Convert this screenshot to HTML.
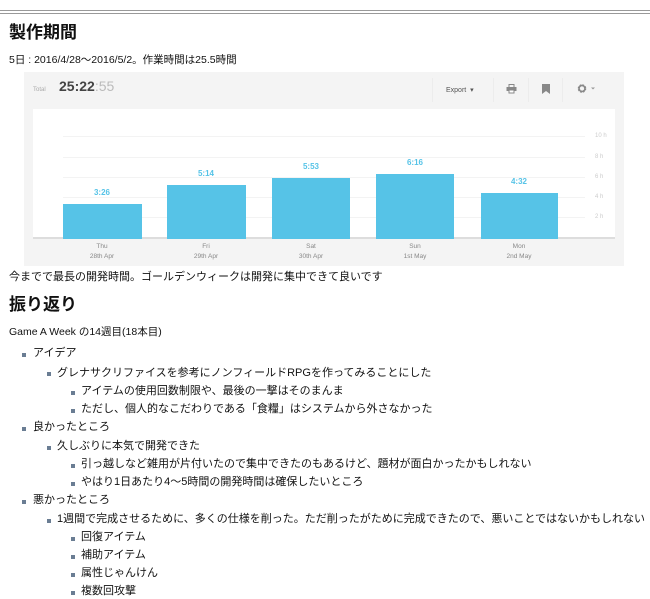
<!DOCTYPE html>
<html><head><meta charset="utf-8"><style>
*{margin:0;padding:0;box-sizing:border-box}
body{width:650px;height:599px;background:#fff;position:relative;overflow:hidden;font-family:"Liberation Sans","Noto Sans CJK JP",sans-serif;color:#111;font-size:11px}
.a{position:absolute;white-space:nowrap;line-height:14px}
h2{position:absolute;font-size:17px;font-weight:bold;line-height:20px;white-space:nowrap}
.b{position:absolute;width:4px;height:4px;background:#6a7d93}
.g{position:absolute;left:63px;width:522px;height:1px;background:#f3f3f3}
.bar{position:absolute;background:#56c3e7;bottom:0}
.v{position:absolute;color:#56c3e7;font-size:8px;font-weight:bold;text-align:center;width:80px}
.d{position:absolute;color:#888;font-size:6.5px;text-align:center;width:80px;line-height:10px}
.y{position:absolute;left:595px;color:#ccc;font-size:6px}
</style></head><body>
<div style="position:absolute;left:0;top:10px;width:650px;height:1px;background:#999"></div>
<div style="position:absolute;left:0;top:13px;width:650px;height:1px;background:#999"></div>
<h2 style="left:9px;top:23px">製作期間</h2>
<div class="a" style="left:9px;top:53px;font-size:10.5px">5日 : 2016/4/28〜2016/5/2。作業時間は25.5時間</div>

<div style="position:absolute;left:24px;top:72px;width:600px;height:194px;background:#f4f4f4">
 <div class="a" style="left:9px;top:11px;font-size:6px;color:#aaa">Total</div>
 <div class="a" style="left:35px;top:7px;font-size:14px;font-weight:bold;color:#444">25:22<span style="color:#bbb;font-weight:normal">:55</span></div>
 <div style="position:absolute;left:408px;top:6px;width:1px;height:24px;background:#ececec"></div>
 <div class="a" style="left:422px;top:12px;font-size:7px;color:#555">Export &nbsp;▾</div>
 <div style="position:absolute;left:469px;top:6px;width:1px;height:24px;background:#ececec"></div>
 <svg style="position:absolute;left:482px;top:12px" width="11" height="10"><rect x="3" y="0.5" width="5" height="3" fill="none" stroke="#888"/><rect x="0.5" y="3" width="10" height="4" fill="#888"/><rect x="3" y="6" width="5" height="3" fill="#fff" stroke="#888"/></svg>
 <div style="position:absolute;left:504px;top:6px;width:1px;height:24px;background:#ececec"></div>
 <svg style="position:absolute;left:518px;top:12px" width="8" height="10"><path d="M0 0H8V10L4 7L0 10Z" fill="#888"/></svg>
 <div style="position:absolute;left:538px;top:6px;width:1px;height:24px;background:#ececec"></div>
 <svg style="position:absolute;left:553px;top:11px" width="20" height="11"><circle cx="5" cy="5.5" r="3.2" fill="none" stroke="#888" stroke-width="2.2" stroke-dasharray="1.6 0.9"/><circle cx="5" cy="5.5" r="3" fill="none" stroke="#888" stroke-width="1.5"/><path d="M14 4.5h4l-2 2z" fill="#999"/></svg>
</div>
<div style="position:absolute;left:33px;top:109px;width:582px;height:130px;background:#fff;border-bottom:2px solid #ddd"></div>
<div class="g" style="top:136px"></div><div class="g" style="top:157px"></div><div class="g" style="top:177px"></div><div class="g" style="top:197px"></div><div class="g" style="top:217px"></div>
<div class="y" style="top:133px">10 h</div><div class="y" style="top:154px">8 h</div><div class="y" style="top:174px">6 h</div><div class="y" style="top:194px">4 h</div><div class="y" style="top:214px">2 h</div>
<div style="position:absolute;left:0;top:0;width:650px;height:239px">
 <div class="bar" style="left:63px;width:79px;height:35px"></div>
 <div class="bar" style="left:167px;width:79px;height:54px"></div>
 <div class="bar" style="left:272px;width:78px;height:61px"></div>
 <div class="bar" style="left:376px;width:78px;height:65px"></div>
 <div class="bar" style="left:481px;width:77px;height:46px"></div>
</div>
<div class="v" style="left:62px;top:188px">3:26</div>
<div class="v" style="left:166px;top:169px">5:14</div>
<div class="v" style="left:271px;top:162px">5:53</div>
<div class="v" style="left:375px;top:158px">6:16</div>
<div class="v" style="left:479px;top:177px">4:32</div>
<div class="d" style="left:62px;top:242px">Thu<br>28th Apr</div>
<div class="d" style="left:166px;top:242px">Fri<br>29th Apr</div>
<div class="d" style="left:271px;top:242px">Sat<br>30th Apr</div>
<div class="d" style="left:375px;top:242px">Sun<br>1st May</div>
<div class="d" style="left:479px;top:242px">Mon<br>2nd May</div>

<div class="a" style="left:9px;top:270px">今までで最長の開発時間。ゴールデンウィークは開発に集中できて良いです</div>
<h2 style="left:9px;top:295px">振り返り</h2>
<div class="a" style="left:9px;top:325px;font-size:10.5px">Game A Week の14週目(18本目)</div>

<div class="b" style="left:22px;top:353px"></div><div class="a" style="left:33px;top:346px">アイデア</div>
<div class="b" style="left:47px;top:372px"></div><div class="a" style="left:57px;top:366px">グレナサクリファイスを参考にノンフィールドRPGを作ってみることにした</div>
<div class="b" style="left:71px;top:391px"></div><div class="a" style="left:81px;top:384px">アイテムの使用回数制限や、最後の一撃はそのまんま</div>
<div class="b" style="left:71px;top:409px"></div><div class="a" style="left:81px;top:402px">ただし、個人的なこだわりである「食糧」はシステムから外さなかった</div>
<div class="b" style="left:22px;top:427px"></div><div class="a" style="left:33px;top:420px">良かったところ</div>
<div class="b" style="left:47px;top:446px"></div><div class="a" style="left:57px;top:439px">久しぶりに本気で開発できた</div>
<div class="b" style="left:71px;top:464px"></div><div class="a" style="left:81px;top:457px">引っ越しなど雑用が片付いたので集中できたのもあるけど、題材が面白かったかもしれない</div>
<div class="b" style="left:71px;top:482px"></div><div class="a" style="left:81px;top:475px">やはり1日あたり4〜5時間の開発時間は確保したいところ</div>
<div class="b" style="left:22px;top:500px"></div><div class="a" style="left:33px;top:493px">悪かったところ</div>
<div class="b" style="left:47px;top:519px"></div><div class="a" style="left:57px;top:512px">1週間で完成させるために、多くの仕様を削った。ただ削ったがために完成できたので、悪いことではないかもしれない</div>
<div class="b" style="left:71px;top:537px"></div><div class="a" style="left:81px;top:530px">回復アイテム</div>
<div class="b" style="left:71px;top:555px"></div><div class="a" style="left:81px;top:548px">補助アイテム</div>
<div class="b" style="left:71px;top:573px"></div><div class="a" style="left:81px;top:566px">属性じゃんけん</div>
<div class="b" style="left:71px;top:591px"></div><div class="a" style="left:81px;top:584px">複数回攻撃</div>
</body></html>
